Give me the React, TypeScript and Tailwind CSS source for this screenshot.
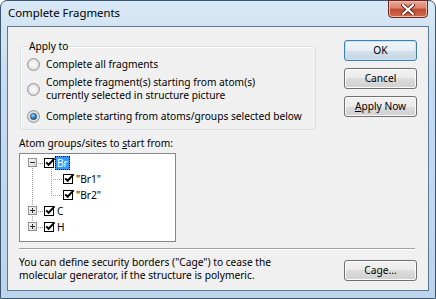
import React from "react";

function Radio({ checked }: { checked?: boolean }) {
  return (
    <svg width="13" height="13" viewBox="0 0 13 13" className="shrink-0">
      <defs>
        <radialGradient id="rbg" cx="0.5" cy="0.5" r="0.5">
          <stop offset="0" stopColor="#fbfbfb" />
          <stop offset="0.6" stopColor="#eeeeee" />
          <stop offset="1" stopColor="#c9c9c9" />
        </radialGradient>
        <radialGradient id="rdot" cx="0.4" cy="0.35" r="0.7">
          <stop offset="0" stopColor="#a5d8fb" />
          <stop offset="0.5" stopColor="#3a8ac6" />
          <stop offset="1" stopColor="#14447a" />
        </radialGradient>
      </defs>
      <circle cx="6.5" cy="6.5" r="6" fill="url(#rbg)" stroke="#9a9a9a" />
      {checked ? <circle cx="6.5" cy="6.5" r="3.2" fill="url(#rdot)" stroke="#1b4f80" strokeWidth="0.6" /> : null}
    </svg>
  );
}

function Check() {
  return (
    <svg width="12" height="12" viewBox="0 0 12 12" className="shrink-0">
      <rect x="0.5" y="1.5" width="9" height="9" fill="#fff" stroke="#000" />
      <path d="M2.2 5.4 L4.6 7.8 L10.6 1.4" fill="none" stroke="#000" strokeWidth="2" />
    </svg>
  );
}

function Button({ children, isDefault }: { children: React.ReactNode; isDefault?: boolean }) {
  return (
    <div
      className={
        isDefault
          ? "flex h-[21px] w-[73px] items-center justify-center rounded-[3px] border border-[#3c7fb1] bg-[linear-gradient(to_bottom,#f0f6fa_0%,#e6eef4_50%,#d4e0ea_50%,#c7d6e3_100%)] leading-none text-black shadow-[inset_0_0_0_1px_#c4e5f6]"
          : "flex h-[21px] w-[73px] items-center justify-center rounded-[3px] border border-[#707070] bg-[linear-gradient(to_bottom,#f2f2f2_0%,#ebebeb_50%,#dddddd_50%,#cfcfcf_100%)] leading-none text-black shadow-[inset_0_0_0_1px_#fbfbfb]"
      }
    >
      {children}
    </div>
  );
}

function TreeLines() {
  const dotsV = (x: number, y1: number, y2: number) => {
    const out = [];
    for (let y = y1; y <= y2; y += 2) out.push(<rect key={`v${x}-${y}`} x={x} y={y} width="1" height="1" fill="#a0a0a0" />);
    return out;
  };
  const dotsH = (y: number, x1: number, x2: number) => {
    const out = [];
    for (let x = x1; x <= x2; x += 2) out.push(<rect key={`h${y}-${x}`} x={x} y={y} width="1" height="1" fill="#a0a0a0" />);
    return out;
  };
  const expander = (cy: number, plus: boolean) => (
    <g key={`e${cy}`}>
      <rect x="8.5" y={cy - 4.5} width="8" height="8" fill="url(#exp)" stroke="#919191" />
      <rect x="10" y={cy - 1} width="5" height="1" fill="#2c2c2c" />
      {plus ? <rect x="12" y={cy - 3} width="1" height="5" fill="#2c2c2c" /> : null}
    </g>
  );
  return (
    <svg width="80" height="87" className="pointer-events-none absolute left-0 top-0">
      <defs>
        <linearGradient id="exp" x1="0" y1="0" x2="1" y2="1">
          <stop offset="0" stopColor="#ffffff" />
          <stop offset="1" stopColor="#d4d4d4" />
        </linearGradient>
      </defs>
      {dotsV(12, 14, 52)}
      {dotsV(12, 62, 68)}
      {dotsH(9, 18, 22)}
      {dotsH(57, 18, 22)}
      {dotsH(73, 18, 22)}
      {dotsV(31, 15, 41)}
      {dotsH(25, 33, 41)}
      {dotsH(41, 33, 41)}
      {expander(9, false)}
      {expander(57, true)}
      {expander(73, true)}
    </svg>
  );
}

export default function App() {
  return (
    <div className="h-[299px] w-[436px] overflow-hidden bg-white font-['Noto_Sans',sans-serif]">
      <div className="flex h-[299px] w-[436px] flex-col rounded-t-[7px] border border-[#3b5670] bg-[linear-gradient(to_bottom,#d9e8f6_0%,#c6dbef_30%,#bcd4ec_100%)] px-[6px] pb-[7px]">
        <div className="flex h-[25px] shrink-0 items-start justify-between">
          <span className="pl-[1px] pt-[5px] text-[11.4px] leading-[14px] text-black">Complete Fragments</span>
          <div className="-mt-[1px] mr-[1px] flex h-[18px] w-[40px] items-center justify-center rounded-b-[4px] border border-[#6b2a20] bg-[linear-gradient(to_bottom,#e9a99a_0%,#d88270_45%,#c24a30_50%,#cf6a4e_100%)] shadow-[inset_0_0_0_1px_#f0b8a8]">
            <svg width="14" height="11" viewBox="0 0 14 11">
              <path d="M2 1 L12 10 M12 1 L2 10" stroke="#5a2318" strokeWidth="4" strokeLinecap="round" />
              <path d="M2 1 L12 10 M12 1 L2 10" stroke="#ffffff" strokeWidth="2.2" strokeLinecap="round" />
            </svg>
          </div>
        </div>
        <div className="flex flex-1 flex-col border border-[#5d7893] bg-[#f0f0f0] px-[11px] text-[10.2px] leading-[13px] text-black">
          <div className="flex pt-[13px]">
            <div className="relative ml-[1px] mt-[6px] h-[84px] w-[296px] rounded-[3px] border border-[#d5dfe5] shadow-[inset_1px_1px_0_#fff]">
              <span className="absolute -top-[7px] left-[7px] bg-[#f0f0f0] px-[1px]">Apply to</span>
              <div className="flex flex-col pl-[6px] pt-[11px]">
                <div className="flex items-center gap-[6px]">
                  <Radio />
                  <span className="whitespace-nowrap">Complete all fragments</span>
                </div>
                <div className="mt-[5px] flex items-center gap-[6px]">
                  <Radio />
                  <span className="whitespace-nowrap">
                    Complete fragment(s) starting from atom(s)
                    <br />
                    currently selected in structure picture
                  </span>
                </div>
                <div className="mt-[8px] flex items-center gap-[6px]">
                  <Radio checked />
                  <span className="whitespace-nowrap">Complete starting from atoms/groups selected below</span>
                </div>
              </div>
            </div>
            <div className="ml-auto flex flex-col gap-[7px]">
              <Button isDefault>OK</Button>
              <Button>Cancel</Button>
              <Button>
                <span>
                  <span className="underline">A</span>pply Now
                </span>
              </Button>
            </div>
          </div>
          <div className="mt-[7px]">
            Atom groups/sites to <span className="underline">s</span>tart from:
          </div>
          <div className="relative mt-[3px] h-[89px] w-[157px] border border-[#828790] bg-white">
            <TreeLines />
            <div className="flex flex-col pt-[1px]">
              <div className="flex h-[16px] items-center pl-[24px]">
                <Check />
                <span className="ml-[-1px] border border-dotted border-[#000] bg-[#3399ff] px-[1px] leading-[12px] text-white">Br</span>
              </div>
              <div className="flex h-[16px] items-center pl-[43px]">
                <Check />
                <span className="ml-[1px]">"Br1"</span>
              </div>
              <div className="flex h-[16px] items-center pl-[43px]">
                <Check />
                <span className="ml-[1px]">"Br2"</span>
              </div>
              <div className="flex h-[16px] items-center pl-[24px]">
                <Check />
                <span className="ml-[1px]">C</span>
              </div>
              <div className="flex h-[16px] items-center pl-[24px]">
                <Check />
                <span className="ml-[1px]">H</span>
              </div>
            </div>
          </div>
          <div className="mt-[6px] h-[2px] w-[396px] border-b border-t border-b-white border-t-[#a0a0a0]" />
          <div className="mt-[6px] flex items-start">
            <div className="leading-[13px]">
              You can define security borders ("Cage") to cease the
              <br />
              molecular generator, if the structure is polymeric.
            </div>
            <div className="ml-auto mt-[4px]">
              <Button>Cage...</Button>
            </div>
          </div>
        </div>
      </div>
    </div>
  );
}
